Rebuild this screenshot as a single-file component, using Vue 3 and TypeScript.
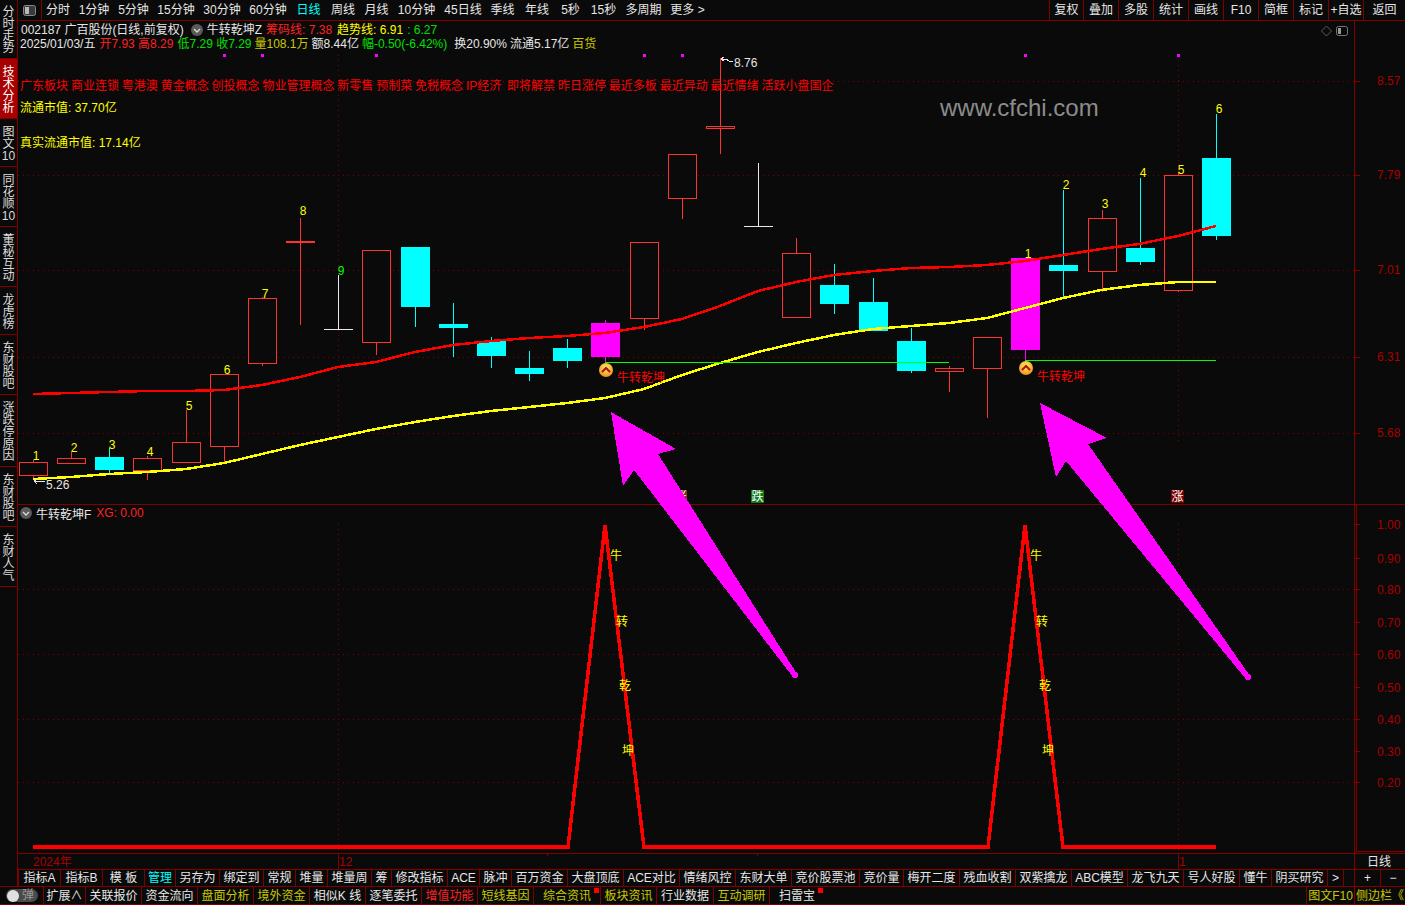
<script setup lang="ts">
interface Cell { t: string; w: number; c?: string; flag?: boolean }
interface Candle { x: number; hi: number; top: number; bot: number; lo: number; k: 'r' | 'c' | 'm' | 'w' }

const sideTabs = ['分时走势', '技术分析', '图文10', '同花顺10', '董秘互动', '龙虎榜', '东财股吧', '涨跌停原因', '东财股吧', '东财人气']

const periods: Cell[] = [
  { t: '分时', w: 32 }, { t: '1分钟', w: 40 }, { t: '5分钟', w: 39 }, { t: '15分钟', w: 46 }, { t: '30分钟', w: 46 },
  { t: '60分钟', w: 46 }, { t: '日线', w: 35, c: 'cyan' }, { t: '周线', w: 34 }, { t: '月线', w: 33 }, { t: '10分钟', w: 47 },
  { t: '45日线', w: 46 }, { t: '季线', w: 33 }, { t: '年线', w: 36 }, { t: '5秒', w: 31 }, { t: '15秒', w: 35 },
  { t: '多周期', w: 45 }, { t: '更多 >', w: 43 }
]
const tools: Cell[] = [
  { t: '复权', w: 34 }, { t: '叠加', w: 35 }, { t: '多股', w: 35 }, { t: '统计', w: 35 }, { t: '画线', w: 35 },
  { t: 'F10', w: 35 }, { t: '简框', w: 35 }, { t: '标记', w: 35 }, { t: '+自选', w: 35 }, { t: '返回', w: 42 }
]
const indicators: Cell[] = [
  { t: '指标A', w: 42 }, { t: '指标B', w: 42 }, { t: '模 板', w: 42 }, { t: '管理', w: 31, c: 'cyan' }, { t: '另存为', w: 44 },
  { t: '绑定到', w: 44 }, { t: '常规', w: 32 }, { t: '堆量', w: 32 }, { t: '堆量周', w: 44 }, { t: '筹', w: 20 },
  { t: '修改指标', w: 56 }, { t: 'ACE', w: 32 }, { t: '脉冲', w: 32 }, { t: '百万资金', w: 56 }, { t: '大盘顶底', w: 56 },
  { t: 'ACE对比', w: 56 }, { t: '情绪风控', w: 56 }, { t: '东财大单', w: 56 }, { t: '竞价股票池', w: 68 }, { t: '竞价量', w: 44 },
  { t: '梅开二度', w: 56 }, { t: '残血收割', w: 56 }, { t: '双紫擒龙', w: 56 }, { t: 'ABC模型', w: 56 }, { t: '龙飞九天', w: 56 },
  { t: '号人好股', w: 56 }, { t: '懂牛', w: 32 }, { t: '阴买研究', w: 56 }, { t: '>', w: 16 }, { t: '', w: 11 },
  { t: '+', w: 26 }, { t: '−', w: 25 }
]
const status: Cell[] = [
  { t: '扩展∧', w: 42 }, { t: '关联报价', w: 56 }, { t: '资金流向', w: 56 }, { t: '盘面分析', w: 56, c: 'olive' },
  { t: '境外资金', w: 56, c: 'olive' }, { t: '相似K 线', w: 56 }, { t: '逐笔委托', w: 56 }, { t: '增值功能', w: 56, c: 'red' },
  { t: '短线基因', w: 56, c: 'olive' }, { t: '综合资讯', w: 67, c: 'olive', flag: true }, { t: '板块资讯', w: 56, c: 'olive' },
  { t: '行业数据', w: 57 }, { t: '互动调研', w: 56, c: 'olive' }, { t: '扫雷宝', w: 55, flag: true }
]

const candles: Candle[] = [
  { x: 19, hi: 460, top: 462, bot: 475, lo: 480, k: 'r' }, { x: 57, hi: 452, top: 458, bot: 463, lo: 463, k: 'r' },
  { x: 95, hi: 448, top: 457, bot: 470, lo: 473, k: 'c' }, { x: 133, hi: 456, top: 458, bot: 470, lo: 480, k: 'r' },
  { x: 172, hi: 410, top: 442, bot: 462, lo: 463, k: 'r' }, { x: 210, hi: 374, top: 374, bot: 446, lo: 463, k: 'r' },
  { x: 248, hi: 297, top: 298, bot: 363, lo: 366, k: 'r' }, { x: 286, hi: 218, top: 241, bot: 242, lo: 325, k: 'r' },
  { x: 324, hi: 275, top: 329, bot: 329, lo: 329, k: 'w' }, { x: 362, hi: 250, top: 250, bot: 342, lo: 355, k: 'r' },
  { x: 401, hi: 247, top: 247, bot: 307, lo: 327, k: 'c' }, { x: 439, hi: 303, top: 324, bot: 328, lo: 357, k: 'c' },
  { x: 477, hi: 337, top: 341, bot: 356, lo: 368, k: 'c' }, { x: 515, hi: 351, top: 368, bot: 374, lo: 381, k: 'c' },
  { x: 553, hi: 339, top: 348, bot: 361, lo: 368, k: 'c' }, { x: 591, hi: 320, top: 323, bot: 357, lo: 362, k: 'm' },
  { x: 630, hi: 242, top: 242, bot: 318, lo: 330, k: 'r' }, { x: 668, hi: 154, top: 154, bot: 198, lo: 219, k: 'r' },
  { x: 706, hi: 58, top: 126, bot: 128, lo: 154, k: 'r' }, { x: 744, hi: 163, top: 226, bot: 226, lo: 226, k: 'w' },
  { x: 782, hi: 238, top: 253, bot: 317, lo: 317, k: 'r' }, { x: 820, hi: 264, top: 285, bot: 304, lo: 314, k: 'c' },
  { x: 859, hi: 278, top: 302, bot: 331, lo: 331, k: 'c' }, { x: 897, hi: 328, top: 341, bot: 371, lo: 373, k: 'c' },
  { x: 935, hi: 366, top: 368, bot: 371, lo: 392, k: 'r' }, { x: 973, hi: 337, top: 337, bot: 368, lo: 418, k: 'r' },
  { x: 1011, hi: 258, top: 258, bot: 350, lo: 362, k: 'm' }, { x: 1049, hi: 190, top: 265, bot: 271, lo: 299, k: 'c' },
  { x: 1088, hi: 210, top: 218, bot: 271, lo: 292, k: 'r' }, { x: 1126, hi: 178, top: 248, bot: 262, lo: 265, k: 'c' },
  { x: 1164, hi: 172, top: 175, bot: 290, lo: 292, k: 'r' }, { x: 1202, hi: 114, top: 158, bot: 236, lo: 240, k: 'c' }
]
const candleColor: Record<Candle['k'], string> = { r: '#ff3232', c: '#00ffff', m: '#ff00ff', w: '#e8e8e8' }
const isFilled = (c: Candle) => c.k === 'c' || c.k === 'm'

const redLine = '33,394 71,393 109,392 147,391 186,391 224,390 262,385 300,377 338,367 376,362 415,352 453,345 491,341 529,338 567,336 605,333 644,327 682,319 720,306 758,291 796,282 834,275 873,271 911,268 949,267 987,265 1025,261 1063,255 1101,249 1139,244 1178,236 1216,226'
const yellowLine = '33,479 71,477 109,474 147,472 186,469 224,463 262,454 300,445 338,437 376,429 415,422 453,416 491,411 529,407 567,403 605,398 644,389 682,375 720,363 758,352 796,343 834,335 873,329 911,326 949,323 987,318 1025,308 1063,298 1101,290 1139,285 1178,282 1216,282'
const peakLine = '33,847 568,847 605,525 644,847 988,847 1025,525 1063,847 1216,847'

const labels = [
  { t: '1', x: 36, y: 460 }, { t: '2', x: 74, y: 452 }, { t: '3', x: 112, y: 449 }, { t: '4', x: 150, y: 456 },
  { t: '5', x: 189, y: 410 }, { t: '6', x: 227, y: 374 }, { t: '7', x: 265, y: 298 }, { t: '8', x: 303, y: 215 },
  { t: '1', x: 1028, y: 258 }, { t: '2', x: 1066, y: 189 }, { t: '3', x: 1105, y: 208 }, { t: '4', x: 1143, y: 177 },
  { t: '5', x: 1181, y: 174 }, { t: '6', x: 1219, y: 113 }
]
const upperAxis = [{ t: '8.57', y: 81 }, { t: '7.79', y: 175 }, { t: '7.01', y: 270 }, { t: '6.31', y: 357 }, { t: '5.68', y: 433 }]
const lowerAxis = [
  { t: '1.00', y: 524 }, { t: '0.90', y: 558 }, { t: '0.80', y: 589 }, { t: '0.70', y: 622 }, { t: '0.60', y: 654 },
  { t: '0.50', y: 687 }, { t: '0.40', y: 719 }, { t: '0.30', y: 751 }, { t: '0.20', y: 782 }
]
const lowerGrid = [589, 654, 719, 782]
const dots = [223, 261, 375, 643, 681, 1024, 1177]
const peakChars = [
  { t: '牛', x: 616, y: 560 }, { t: '转', x: 622, y: 626 }, { t: '乾', x: 625, y: 690 }, { t: '坤', x: 628, y: 755 },
  { t: '牛', x: 1036, y: 560 }, { t: '转', x: 1042, y: 626 }, { t: '乾', x: 1045, y: 690 }, { t: '坤', x: 1048, y: 755 }
]
const signals = [{ x: 606, y: 370, tx: 617, ty: 382 }, { x: 1026, y: 368, tx: 1037, ty: 381 }]
const tags = [
  { t: '涨', x: 674, cls: '#7a3b10' }, { t: '跌', x: 751, cls: '#0a7a14' }, { t: '涨', x: 1171, cls: '#7a0000' }
]
const concepts = '广东板块 商业连锁 粤港澳 黄金概念 创投概念 物业管理概念 新零售 预制菜 免税概念 IP经济  即将解禁 昨日涨停 最近多板 最近异动 最近情绪 活跃小盘国企'
</script>

<template>
  <div class="app">
    <div class="upper">
      <aside class="side">
        <div v-for="(s, i) in sideTabs" :key="i" class="side-tab" :class="{ active: i === 1 }">{{ s }}</div>
      </aside>
      <div class="main">
        <header class="toolbar">
          <div class="layout-btn">
            <svg width="13" height="11" viewBox="0 0 13 11">
              <rect x="0.5" y="0.5" width="12" height="10" rx="2" fill="#3a3a3a" stroke="#8a8a8a" />
              <rect x="2" y="2" width="4" height="7" fill="#b8b8b8" />
            </svg>
          </div>
          <div v-for="p in periods" :key="p.t" class="period" :class="p.c" :style="{ width: p.w + 'px' }">{{ p.t }}</div>
          <div class="spacer"></div>
          <div v-for="t in tools" :key="t.t" class="tool" :style="{ width: t.w + 'px' }">{{ t.t }}</div>
        </header>

        <div class="chart">
          <svg class="canvas" width="1387" height="848" viewBox="18 21 1387 848">
            <defs>
              <radialGradient id="coin" cx="50%" cy="35%" r="65%">
                <stop offset="0%" stop-color="#fff070" />
                <stop offset="100%" stop-color="#f09010" />
              </radialGradient>
            </defs>

            <!-- grid -->
            <g class="crisp">
              <line v-for="a in upperAxis" :key="a.t" class="dot" x1="18" x2="1354" :y1="a.y + 0.5" :y2="a.y + 0.5" />
              <line v-for="y in lowerGrid" :key="y" class="dot" x1="18" x2="1354" :y1="y + 0.5" :y2="y + 0.5" />
              <line class="dot" x1="338.5" x2="338.5" y1="55" y2="445" />
              <line class="dot" x1="1178.5" x2="1178.5" y1="55" y2="445" />
              <line class="dot" x1="338.5" x2="338.5" y1="524" y2="853" />
              <line class="dot" x1="1178.5" x2="1178.5" y1="524" y2="853" />

              <line class="frame" x1="18" x2="1405" y1="504.5" y2="504.5" />
              <line class="frame" x1="18" x2="1405" y1="853.5" y2="853.5" />
              <line class="frame" x1="1354.5" x2="1354.5" y1="21" y2="869" />
              <polyline class="frame" points="1356.5,505 1356.5,851.5 1405,851.5" />
              <line class="frame" x1="338.5" x2="338.5" y1="853" y2="869" />
              <line class="frame" x1="1178.5" x2="1178.5" y1="853" y2="869" />
              <line class="frame" x1="547.5" x2="547.5" y1="853" y2="856" />
              <line class="frame" x1="757.5" x2="757.5" y1="853" y2="856" />
              <line v-for="a in upperAxis" :key="'t' + a.t" class="frame" x1="1354" x2="1360" :y1="a.y + 0.5" :y2="a.y + 0.5" />
              <line v-for="a in lowerAxis" :key="'t' + a.t" class="frame" x1="1354" x2="1360" :y1="a.y + 0.5" :y2="a.y + 0.5" />
            </g>

            <text v-for="a in upperAxis" :key="'l' + a.t" class="axis" x="1377" :y="a.y + 4">{{ a.t }}</text>
            <text v-for="a in lowerAxis" :key="'l' + a.t" class="axis" x="1377" :y="a.y + 5">{{ a.t }}</text>
            <text class="axis" x="33" y="866">2024年</text>
            <text class="axis" x="339" y="866">12</text>
            <text class="axis" x="1179" y="866">1</text>
            <text class="day" x="1367" y="866">日线</text>

            <rect v-for="d in dots" :key="d" :x="d" y="54" width="3" height="3" fill="#ff00ff" />

            <!-- candles -->
            <g class="crisp">
              <g v-for="(c, i) in candles" :key="i">
                <line :x1="c.x + 14.5" :x2="c.x + 14.5" :y1="c.hi" :y2="c.lo" :stroke="candleColor[c.k]" />
                <rect v-if="isFilled(c)" :x="c.x" :y="c.top" width="29" :height="c.bot - c.top" :fill="candleColor[c.k]" />
                <line v-else-if="c.k === 'w'" :x1="c.x" :x2="c.x + 29" :y1="c.top + 0.5" :y2="c.top + 0.5" :stroke="candleColor[c.k]" />
                <rect v-else :x="c.x + 0.5" :y="c.top + 0.5" width="28" :height="c.bot - c.top" fill="#0a0a0a" :stroke="candleColor[c.k]" />
              </g>
              <polyline :points="redLine" class="ma" stroke="#ff0000" />
              <polyline :points="yellowLine" class="ma" stroke="#ffff00" />
              <line x1="605" x2="949" y1="362.5" y2="362.5" stroke="#00ff00" />
              <line x1="1025" x2="1216" y1="360.5" y2="360.5" stroke="#00ff00" />
            </g>

            <text v-for="(l, i) in labels" :key="i" class="num" :x="l.x" :y="l.y" text-anchor="middle">{{ l.t }}</text>
            <text class="num green" x="341" y="275" text-anchor="middle">9</text>

            <path class="crisp pointer" d="M34 481L37 479M34 481L37 484M34 481.5L45 481.5" />
            <text class="white" x="46" y="489">5.26</text>
            <path class="crisp pointer" d="M721 59L724 57M721 59L724 61M721 59L726 59L729 61L733 62" />
            <text class="white" x="734" y="67">8.76</text>

            <g v-for="s in signals" :key="s.x">
              <circle :cx="s.x" :cy="s.y" r="7" fill="url(#coin)" />
              <path :d="`M${s.x - 4} ${s.y + 2}L${s.x} ${s.y - 2}L${s.x + 4} ${s.y + 2}`" fill="none" stroke="#b01010" stroke-width="2" />
              <text class="signal" :x="s.tx" :y="s.ty">牛转乾坤</text>
            </g>

            <g v-for="(t, i) in tags" :key="i">
              <rect :x="t.x" y="490" width="13" height="13" :fill="t.cls" />
              <text class="tag" :x="t.x + 0.5" y="501">{{ t.t }}</text>
            </g>

            <text class="mark" x="940" y="116">www.cfchi.com</text>

            <!-- lower pane -->
            <g class="crisp">
              <polyline :points="peakLine" class="peak" />
            </g>
            <text v-for="(p, i) in peakChars" :key="i" class="num" :x="p.x" :y="p.y" text-anchor="middle">{{ p.t }}</text>

            <!-- pointer arrows -->
            <g class="crisp" fill="#ff00ff">
              <polygon points="611,412 676,449 658,454 797,674 793,677 634,470 623,486" />
              <circle cx="795" cy="675" r="3" />
              <polygon points="1040,403 1107,438 1088,444 1250,676 1246,679 1066,461 1056,477" />
              <circle cx="1248" cy="677" r="3" />
            </g>
          </svg>

          <!-- text read-outs over the chart -->
          <div class="readout">
            <div class="row">
              <span class="code">002187 广百股份(日线,前复权)</span>
              <svg class="chev" width="12" height="12" viewBox="0 0 12 12">
                <circle cx="6" cy="6" r="6" fill="#5a5a5a" />
                <path d="M3 5L6 8L9 5" fill="none" stroke="#d8d8d8" stroke-width="1.4" />
              </svg>
              <span>牛转乾坤Z</span>
              <span class="red gap4">筹码线: 7.38</span>
              <span class="yellow gap5">趋势线: 6.91</span>
              <span class="green gap4">: 6.27</span>
            </div>
            <div class="row">
              <span>2025/01/03/五</span>
              <span class="red gap4">开7.93 高8.29</span>
              <span class="green gap4">低7.29 收7.29</span>
              <span class="olive gap3">量108.1万</span>
              <span class="gap3">额8.44亿</span>
              <span class="green gap3">幅-0.50(-6.42%)</span>
              <span class="gap7">换20.90%</span>
              <span class="gap3">流通5.17亿</span>
              <span class="olive gap3">百货</span>
            </div>
            <div class="concepts">{{ concepts }}</div>
            <div class="yellow mv1">流通市值: 37.70亿</div>
            <div class="yellow mv2">真实流通市值: 17.14亿</div>
          </div>

          <div class="lower-title">
            <svg class="chev" width="12" height="12" viewBox="0 0 12 12">
              <circle cx="6" cy="6" r="6" fill="#5a5a5a" />
              <path d="M3 5L6 8L9 5" fill="none" stroke="#d8d8d8" stroke-width="1.4" />
            </svg>
            <span>牛转乾坤F</span>
            <span class="red xg">XG: 0.00</span>
          </div>

          <div class="corner">
            <svg width="28" height="12" viewBox="0 0 28 12">
              <path d="M5.5 1L10.5 6L5.5 11L0.5 6Z" fill="none" stroke="#5a5a5a" />
              <rect x="15.5" y="1.5" width="11" height="9" rx="2" fill="none" stroke="#777" />
              <rect x="17" y="3" width="3" height="6" fill="#999" />
            </svg>
          </div>
        </div>

        <nav class="indicators">
          <div v-for="(n, i) in indicators" :key="i" class="ind" :class="n.c" :style="{ width: n.w + 'px' }">{{ n.t }}</div>
        </nav>
      </div>
    </div>

    <footer class="status">
      <div class="toggle">
        <span class="knob"></span>
        <span class="toggle-t">弹</span>
      </div>
      <div v-for="(s, i) in status" :key="i" class="st" :class="s.c" :style="{ width: s.w + 'px' }">
        {{ s.t }}<i v-if="s.flag" class="flag"></i>
      </div>
      <div class="spacer"></div>
      <div class="st olive f10">图文F10</div>
      <div class="st olive rail">侧边栏《</div>
    </footer>
  </div>
</template>

<style>
html, body { margin: 0; padding: 0; background: #0a0a0a; overflow: hidden; }
</style>

<style scoped>
.app {
  width: 1405px;
  height: 905px;
  background: #0a0a0a;
  color: #e6e6e6;
  font-family: "Liberation Sans", "Noto Sans CJK SC", sans-serif;
  font-size: 12px;
  display: flex;
  flex-direction: column;
  overflow: hidden;
}
.upper { display: flex; height: 886px; flex: none; }
.side {
  width: 17px;
  flex: none;
  border-right: 1px solid #800000;
  display: flex;
  flex-direction: column;
  margin-top: -1px;
}
.side-tab {
  width: 15px;
  padding: 7px 1px 4px;
  line-height: 12px;
  text-align: center;
  word-break: break-all;
  border-bottom: 1px solid #800000;
  color: #dcdcdc;
}
.side-tab.active { background: #a80000; color: #fff; }
.main { flex: 1; display: flex; flex-direction: column; min-width: 0; }

.toolbar {
  height: 20px;
  flex: none;
  display: flex;
  border-bottom: 1px solid #800000;
  line-height: 21px;
}
.layout-btn {
  width: 24px;
  border-right: 1px solid #800000;
  display: flex;
  align-items: center;
  justify-content: center;
  box-sizing: border-box;
}
.period, .tool { text-align: center; flex: none; box-sizing: border-box; white-space: nowrap; }
.tool { border-left: 1px solid #800000; }
.spacer { flex: 1; }

.chart { position: relative; height: 848px; flex: none; }
.canvas { display: block; }
.crisp { shape-rendering: crispEdges; }
.dot { stroke: #800000; stroke-dasharray: 1 4; }
.frame { stroke: #800000; fill: none; }
.pointer { fill: none; stroke: #e6e6e6; }
.ma { fill: none; stroke-width: 2.5; }
.peak { fill: none; stroke: #ff0000; stroke-width: 3.5; }
.canvas text { font-family: "Liberation Sans", "Noto Sans CJK SC", sans-serif; font-size: 12px; }
.canvas .axis { fill: #a80000; }
.canvas .day { fill: #e6e6e6; }
.canvas .num { fill: #ffff00; }
.canvas .num.green { fill: #00ff00; }
.canvas .white { fill: #e6e6e6; }
.canvas .signal { fill: #ff0000; }
.canvas .tag { fill: #fff; }
.canvas .mark { fill: #8c8c8c; font-size: 24px; }

.readout { position: absolute; left: 2px; top: 2px; line-height: 14px; white-space: pre; }
.row { display: flex; align-items: center; height: 14px; }
.code { margin-left: 1px; }
.chev { margin: 0 4px 0 7px; flex: none; }
.concepts { color: #ff0000; margin-top: 28px; word-spacing: -0.45px; }
.mv1 { margin-top: 8px; }
.mv2 { margin-top: 21px; }
.gap3 { margin-left: 3px; }
.gap4 { margin-left: 4px; }
.gap5 { margin-left: 5px; }
.gap7 { margin-left: 7px; }

.lower-title {
  position: absolute;
  left: 2px;
  top: 485px;
  display: flex;
  align-items: center;
  height: 14px;
}
.lower-title .chev { margin: 0 4px 0 0; }
.xg { margin-left: 5px; }
.corner { position: absolute; left: 1303px; top: 4px; line-height: 0; }

.indicators {
  display: flex;
  height: 17px;
  flex: none;
  line-height: 17px;
  box-sizing: border-box;
  border-top: 1px solid #800000;
}
.ind {
  box-sizing: border-box;
  text-align: center;
  white-space: nowrap;
  border-left: 1px solid #800000;
  flex: none;
}

.status {
  height: 19px;
  flex: none;
  display: flex;
  border-top: 1px solid #800000;
  border-bottom: 1px solid #800000;
  box-sizing: border-box;
  line-height: 18px;
}
.toggle {
  width: 32px;
  height: 13px;
  margin: 2px 5px 0 6px;
  border-radius: 7px;
  background: #4a4a4a;
  display: flex;
  align-items: center;
  flex: none;
}
.knob { width: 12px; height: 12px; border-radius: 50%; background: #e0e0e0; margin-left: 1px; }
.toggle-t { color: #999; margin-left: 3px; line-height: 13px; }
.st {
  position: relative;
  box-sizing: border-box;
  text-align: center;
  white-space: nowrap;
  border-left: 1px solid #800000;
  flex: none;
}
.flag { position: absolute; right: 1px; top: 1px; width: 5px; height: 5px; background: #ff0000; }
.f10 { width: 48px; }
.rail { width: 51px; }

.cyan { color: #00ffff; }
.olive { color: #c8c800; }
.red { color: #ff2020; }
.yellow { color: #ffff00; }
.green { color: #00e000; }
</style>
